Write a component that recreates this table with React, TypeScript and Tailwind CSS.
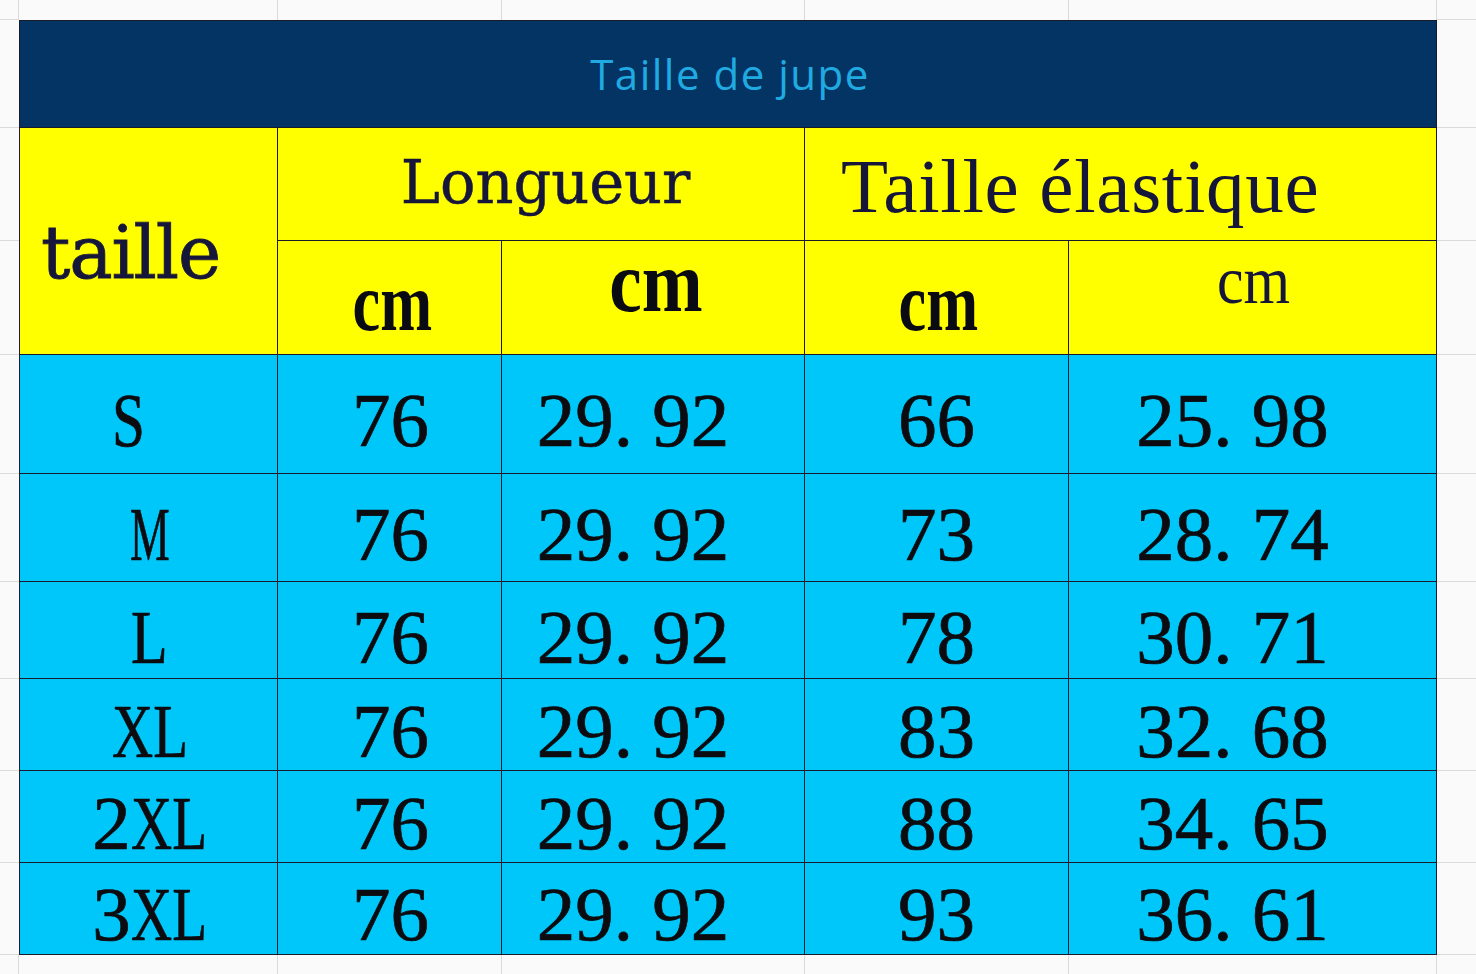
import React from 'react';

const B = 'border-r border-b border-[#1a1a2a]';
const M = 'border-[#dadada]';

function Cond({ w, s, children }: { w: string; s: string; children: React.ReactNode }) {
  return (
    <span className={`inline-block whitespace-nowrap text-left ${w}`}>
      <span className={`inline-block origin-left ${s}`}>{children}</span>
    </span>
  );
}

type Row = {
  row: string;
  pt: string;
  size: React.ReactNode;
  sizePad: string;
  e1: string;
  e2: string;
};

const rows: Row[] = [
  { row: 'row-start-5', pt: 'pt-[27px]', size: <Cond w="w-[34px]" s="scale-x-[0.77]">S</Cond>, sizePad: 'pr-[40px]', e1: '66', e2: '25. 98' },
  { row: 'row-start-6', pt: 'pt-[22px]', size: <Cond w="w-[40px]" s="scale-x-[0.58]">M</Cond>, sizePad: 'pl-[2px]', e1: '73', e2: '28. 74' },
  { row: 'row-start-7', pt: 'pt-[17px]', size: <Cond w="w-[37px]" s="scale-x-[0.78]">L</Cond>, sizePad: 'pl-[2px]', e1: '78', e2: '30. 71' },
  { row: 'row-start-8', pt: 'pt-[14px]', size: <Cond w="w-[76px]" s="scale-x-[0.74]">XL</Cond>, sizePad: 'pl-[2px]', e1: '83', e2: '32. 68' },
  { row: 'row-start-9', pt: 'pt-[14px]', size: <>2<Cond w="w-[76px]" s="scale-x-[0.74]">XL</Cond></>, sizePad: 'pl-[2px]', e1: '88', e2: '34. 65' },
  { row: 'row-start-10', pt: 'pt-[13px]', size: <>3<Cond w="w-[76px]" s="scale-x-[0.74]">XL</Cond></>, sizePad: 'pl-[2px]', e1: '93', e2: '36. 61' },
];

const body = "font-['Liberation_Serif',serif] text-[77px] leading-none text-[#0c0c10] [-webkit-text-stroke:0.7px_#0c0c10] bg-[#00c7f9] text-center whitespace-nowrap";
const head = 'bg-[#ffff00] text-[#16163a] whitespace-nowrap';

export default function App() {
  return (
    <div className="w-[1476px] h-[974px] bg-[#fafafa] overflow-hidden grid grid-cols-[19px_259px_224px_303px_264px_368px_1fr] grid-rows-[20px_108px_113px_114px_119px_108px_97px_92px_92px_92px_1fr]">
      {/* top margin row */}
      <div className={`col-start-1 row-start-1 border-r border-b ${M}`} />
      <div className={`col-start-2 row-start-1 border-r ${M}`} />
      <div className={`col-start-3 row-start-1 border-r ${M}`} />
      <div className={`col-start-4 row-start-1 border-r ${M}`} />
      <div className={`col-start-5 row-start-1 border-r ${M}`} />
      <div className={`col-start-6 row-start-1 border-r ${M}`} />
      <div className={`col-start-7 row-start-1 border-b ${M}`} />

      {/* left margin column */}
      <div className={`col-start-1 row-start-2 border-b ${M}`} />
      <div className={`col-start-1 row-start-3 border-b ${M}`} />
      <div className={`col-start-1 row-start-4 border-b ${M}`} />
      <div className={`col-start-1 row-start-5 border-b ${M}`} />
      <div className={`col-start-1 row-start-6 border-b ${M}`} />
      <div className={`col-start-1 row-start-7 border-b ${M}`} />
      <div className={`col-start-1 row-start-8 border-b ${M}`} />
      <div className={`col-start-1 row-start-9 border-b ${M}`} />
      <div className={`col-start-1 row-start-10 border-b ${M}`} />

      {/* right margin column */}
      <div className={`col-start-7 row-start-2 border-b ${M}`} />
      <div className={`col-start-7 row-start-3 border-b ${M}`} />
      <div className={`col-start-7 row-start-4 border-b ${M}`} />
      <div className={`col-start-7 row-start-5 border-b ${M}`} />
      <div className={`col-start-7 row-start-6 border-b ${M}`} />
      <div className={`col-start-7 row-start-7 border-b ${M}`} />
      <div className={`col-start-7 row-start-8 border-b ${M}`} />
      <div className={`col-start-7 row-start-9 border-b ${M}`} />
      <div className={`col-start-7 row-start-10 border-b ${M}`} />

      {/* bottom margin row */}
      <div className={`col-start-1 row-start-11 border-r ${M}`} />
      <div className={`col-start-2 row-start-11 border-r ${M}`} />
      <div className={`col-start-3 row-start-11 border-r ${M}`} />
      <div className={`col-start-4 row-start-11 border-r ${M}`} />
      <div className={`col-start-5 row-start-11 border-r ${M}`} />
      <div className={`col-start-6 row-start-11 border-r ${M}`} />
      <div className="col-start-7 row-start-11" />

      {/* title */}
      <div className={`col-start-2 col-span-5 row-start-2 ${B} border-t border-l bg-[#033463] flex items-center justify-center`}>
        <span className="font-['Open_Sans',sans-serif] text-[42px] leading-none tracking-[1.5px] text-[#20aae2] pl-[4px]">Taille de jupe</span>
      </div>

      {/* header */}
      <div className={`col-start-2 row-start-3 row-span-2 ${B} border-l ${head} pl-[21px] pt-[88px]`}>
        <span className="font-['DejaVu_Serif',serif] text-[73px] leading-none tracking-[-1.2px] [-webkit-text-stroke:0.8px_#16163a]">taille</span>
      </div>
      <div className={`col-start-3 col-span-2 row-start-3 ${B} ${head} text-center pl-[9px] pt-[25px]`}>
        <span className="font-['DejaVu_Serif',serif] text-[59px] leading-none [-webkit-text-stroke:0.5px_#16163a]">Longueur</span>
      </div>
      <div className={`col-start-5 col-span-2 row-start-3 ${B} ${head} pl-[36px] pt-[20px]`}>
        <span className="font-['Liberation_Serif',serif] text-[77px] leading-none tracking-[0.7px]">Taille élastique</span>
      </div>

      <div className={`col-start-3 row-start-4 ${B} ${head} text-center pl-[6px] pt-[21px]`}>
        <span className="inline-block font-['Liberation_Serif',serif] font-bold text-[82px] leading-none scale-x-[0.76] text-[#0a0a12]">cm</span>
      </div>
      <div className={`col-start-4 row-start-4 ${B} ${head} text-center pl-[5px] pt-0`}>
        <span className="inline-block font-['Liberation_Serif',serif] font-bold text-[86px] leading-none scale-x-[0.85] text-[#0a0a12] -mt-[2px]">cm</span>
      </div>
      <div className={`col-start-5 row-start-4 ${B} ${head} text-center pl-[3px] pt-[21px]`}>
        <span className="inline-block font-['Liberation_Serif',serif] font-bold text-[82px] leading-none scale-x-[0.76] text-[#0a0a12]">cm</span>
      </div>
      <div className={`col-start-6 row-start-4 ${B} ${head} text-center pl-[3px] pt-[5px]`}>
        <span className="inline-block font-['Liberation_Serif',serif] text-[68px] leading-none scale-x-[0.88]">cm</span>
      </div>

      {/* body */}
      {rows.map((r, i) => (
        <React.Fragment key={i}>
          <div className={`col-start-2 ${r.row} ${B} border-l ${body} ${r.pt} ${r.sizePad}`}>{r.size}</div>
          <div className={`col-start-3 ${r.row} ${B} ${body} ${r.pt} pl-[2px]`}>76</div>
          <div className={`col-start-4 ${r.row} ${B} ${body} ${r.pt} pr-[40px]`}>29. 92</div>
          <div className={`col-start-5 ${r.row} ${B} ${body} ${r.pt}`}>{r.e1}</div>
          <div className={`col-start-6 ${r.row} ${B} ${body} ${r.pt} pr-[40px]`}>{r.e2}</div>
        </React.Fragment>
      ))}
    </div>
  );
}
